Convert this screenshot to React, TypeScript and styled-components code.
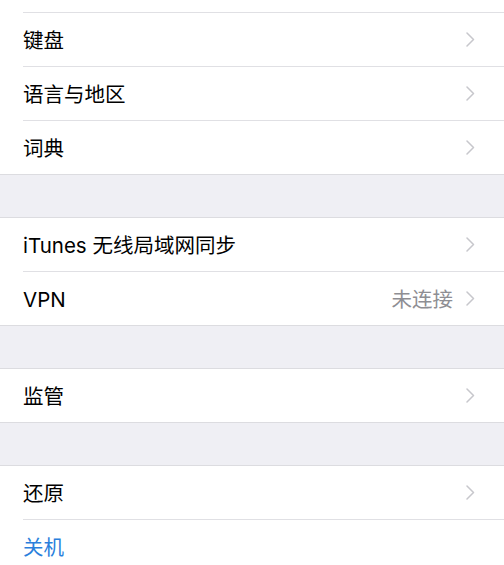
import { FC } from 'react';
import styled, { createGlobalStyle } from 'styled-components';

const GlobalStyle = createGlobalStyle`
  html, body {
    margin: 0;
    padding: 0;
    background: #efeff4;
  }
  body {
    font-family: Inter, "Noto Sans CJK SC", sans-serif;
    -webkit-font-smoothing: antialiased;
  }
`;

const Page = styled.div`
  width: 100%;
  height: 565px;
  overflow: hidden;
  background: #efeff4;
`;

const Group = styled.section<{ $offset?: number }>`
  background: #ffffff;
  border-top: 1px solid #dcdce0;
  border-bottom: 1px solid #dcdce0;
  margin-top: ${(p) => (p.$offset !== undefined ? p.$offset : 42)}px;
`;

const Row = styled.div`
  display: flex;
  padding-left: 23px;
  & + & > div {
    border-top: 1px solid #e0e0e4;
  }
`;

const RowInner = styled.div`
  flex: 1;
  height: 53px;
  display: flex;
  align-items: center;
  padding-right: 29px;
`;

const Label = styled.span<{ $blue?: boolean }>`
  flex: 1;
  font-size: 20.5px;
  color: ${(p) => (p.$blue ? '#2a7fdc' : '#000000')};
  line-height: 1;
  padding-top: 3px;
`;

const Detail = styled.span`
  font-size: 20.5px;
  color: #8e8e93;
  margin-right: 13px;
  line-height: 1;
  padding-top: 3px;
`;

const Chevron: FC = () => (
  <svg width="9" height="15" viewBox="0 0 9 15">
    <path
      d="M1 1 L7.5 7.5 L1 14"
      fill="none"
      stroke="#c7c7cc"
      strokeWidth="1.5"
      strokeLinecap="round"
      strokeLinejoin="round"
    />
  </svg>
);

type Item = { label: string; detail?: string; blue?: boolean; noChevron?: boolean };

const SettingsRow: FC<{ item: Item }> = ({ item }) => (
  <Row>
    <RowInner>
      <Label $blue={item.blue}>{item.label}</Label>
      {item.detail && <Detail>{item.detail}</Detail>}
      {!item.noChevron && <Chevron />}
    </RowInner>
  </Row>
);

const groups: { offset?: number; items: Item[] }[] = [
  {
    offset: -42,
    items: [
      { label: '日期与时间' },
      { label: '键盘' },
      { label: '语言与地区' },
      { label: '词典' },
    ],
  },
  {
    items: [
      { label: 'iTunes 无线局域网同步' },
      { label: 'VPN', detail: '未连接' },
    ],
  },
  { items: [{ label: '监管' }] },
  {
    items: [
      { label: '还原' },
      { label: '关机', blue: true, noChevron: true },
    ],
  },
];

export default function App() {
  return (
    <>
      <GlobalStyle />
      <Page>
        {groups.map((g, i) => (
          <Group key={i} $offset={g.offset}>
            {g.items.map((item) => (
              <SettingsRow key={item.label} item={item} />
            ))}
          </Group>
        ))}
      </Page>
    </>
  );
}
